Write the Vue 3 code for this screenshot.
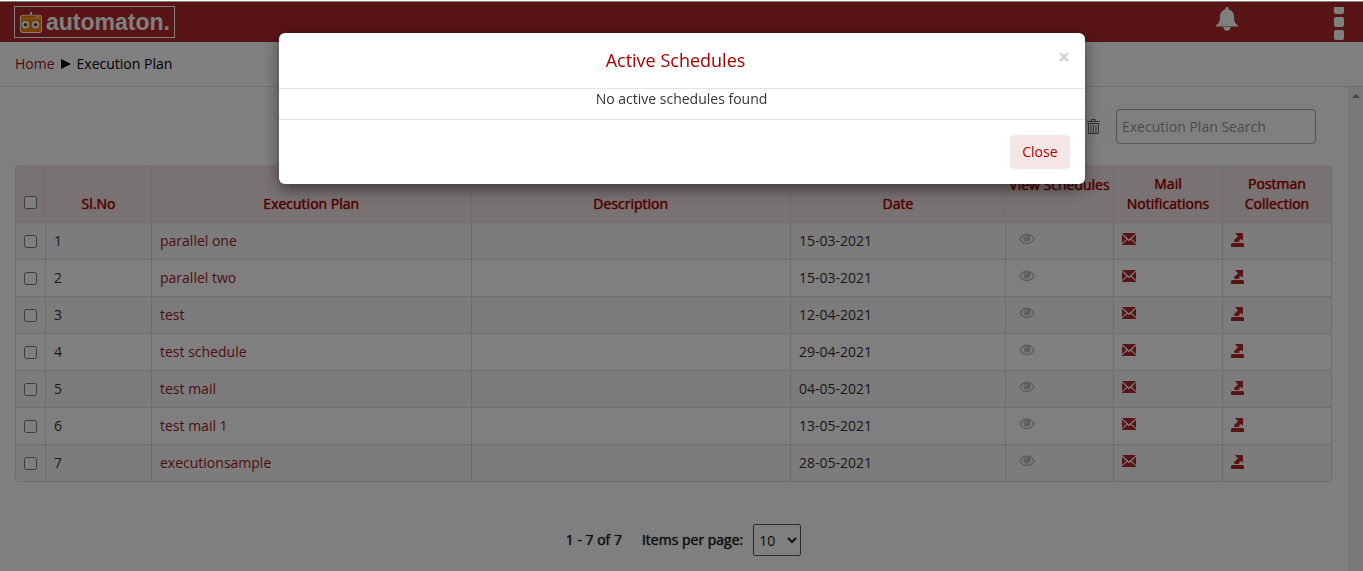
<template>
  <div class="page">
    <header class="topbar">
      <a class="brand" href="#">
        <svg class="brand-icon" viewBox="0 0 24 24" aria-hidden="true">
          <rect x="11" y="1" width="2" height="4" fill="#fff" />
          <rect x="0" y="4" width="24" height="20" rx="3" fill="#fff" />
          <rect x="1" y="5" width="22" height="18" rx="2" fill="#f08000" />
          <rect x="17" y="6" width="4" height="1" fill="#fff" />
          <rect x="1" y="8" width="22" height="1" fill="#fff" opacity=".4" />
          <circle cx="6" cy="15" r="4" fill="#fff" />
          <circle cx="17" cy="15" r="4" fill="#fff" />
          <circle cx="6" cy="15" r="2" fill="#444" />
          <circle cx="17" cy="15" r="2" fill="#444" />
        </svg>
        <span>automaton.</span>
      </a>
      <div class="topbar-actions">
        <button class="icon-btn" type="button" aria-label="Notifications">
          <svg width="22" height="24" viewBox="0 0 22 24" fill="#fff">
            <path d="M11 0c1 0 1.700.7 1.700 1.700v.8C16 3.300 18 6 18 9.500c0 5 1 7 4 8.700v1.300H0v-1.300c3-1.700 4-3.700 4-8.700C4 6 6 3.300 9.300 2.500v-.8C9.300.7 10 0 11 0zM7.500 20h7A3.500 3.500 0 0 1 11 23.800 3.500 3.500 0 0 1 7.500 20z" />
          </svg>
        </button>
        <button class="icon-btn" type="button" aria-label="Menu">
          <svg width="10" height="33" viewBox="0 0 10 33" fill="#fff">
            <path d="M0 0h10v5a2 2 0 0 1-2 2H2a2 2 0 0 1-2-2z" />
            <rect y="10" width="10" height="10" rx="2" />
            <rect y="23" width="10" height="10" rx="2" />
          </svg>
        </button>
      </div>
    </header>

    <nav class="breadcrumb">
      <a href="#">Home</a>
      <svg width="10" height="10" viewBox="0 0 10 10" aria-hidden="true"><path d="M0 0l10 5-10 5z" fill="#000" /></svg>
      <span class="current">Execution Plan</span>
    </nav>

    <div class="body">
      <main class="content">
        <div class="toolbar">
          <button class="trash-btn" type="button" aria-label="Delete">
            <svg width="13" height="16" viewBox="0 0 13 16" fill="none" stroke="#666">
              <path d="M4.500 2V.5h4V2M0 2.500h13M1 4.500h11M1.500 4.500v10h10v-10M4 6v8M6.500 6v8M9 6v8" />
            </svg>
          </button>
          <input v-model="search" class="search" type="text" placeholder="Execution Plan Search" aria-label="Execution Plan Search" />
        </div>

        <table class="plans">
          <colgroup>
            <col class="c-check" />
            <col class="c-no" />
            <col />
            <col />
            <col class="c-date" />
            <col class="c-view" />
            <col class="c-icon" />
            <col class="c-icon" />
          </colgroup>
          <thead>
            <tr>
              <th><input type="checkbox" aria-label="Select all" /></th>
              <th>Sl.No</th>
              <th>Execution Plan</th>
              <th>Description</th>
              <th>Date</th>
              <th class="view-head">View Schedules</th>
              <th>Mail Notifications</th>
              <th>Postman Collection</th>
            </tr>
          </thead>
          <tbody>
            <tr v-for="(plan, i) in plans" :key="plan.name">
              <td><input type="checkbox" :aria-label="'Select ' + plan.name" /></td>
              <td>{{ i + 1 }}</td>
              <td><a href="#">{{ plan.name }}</a></td>
              <td></td>
              <td>{{ plan.date }}</td>
              <td class="icon-cell view">
                <button class="icon-btn" type="button" aria-label="View schedules">
                  <svg width="16" height="12" viewBox="0 0 16 12">
                    <path d="M1 6C4-.3 12-.3 15 6 12 12 4 12 1 6z" fill="none" stroke="#bdbdbd" stroke-width="1.500" />
                    <circle cx="8" cy="5" r="3.500" fill="#bdbdbd" />
                    <path d="M6 5q0-2 2-2" fill="none" stroke="#fff" />
                  </svg>
                </button>
              </td>
              <td class="icon-cell">
                <button class="icon-btn" type="button" aria-label="Mail notifications">
                  <svg width="14" height="12" viewBox="0 0 14 12" fill="#b2282d">
                    <path d="M0 0h14L7 6.500zM0 1.500L4.500 6 0 10zM14 1.500L9.500 6l4.500 4zM0 12v-.7l5.300-4.600L7 8.200l1.700-1.500 5.300 4.600v.7z" />
                  </svg>
                </button>
              </td>
              <td class="icon-cell">
                <button class="icon-btn" type="button" aria-label="Postman collection">
                  <svg width="13" height="14" viewBox="0 0 13 14" fill="#b2282d">
                    <path d="M4 0h8v7.500L10 6 7.500 8 9 9H3.500L3 7l4-3.500zM1 10h11l1 1v3H0v-3z" />
                  </svg>
                </button>
              </td>
            </tr>
          </tbody>
        </table>

        <div class="pager">
          <span>1 - {{ plans.length }} of {{ plans.length }}</span>
          <label for="page-size">Items per page:</label>
          <select id="page-size" v-model="pageSize">
            <option :value="10">10</option>
            <option :value="25">25</option>
            <option :value="50">50</option>
          </select>
        </div>
      </main>
      <div class="scroll-track" aria-hidden="true">
        <svg width="8" height="4" viewBox="0 0 8 4"><path d="M4 0l4 4H0z" fill="#8a8a8a" /></svg>
      </div>
    </div>

    <div v-if="open" class="backdrop">
      <section class="modal" role="dialog" aria-labelledby="modal-title">
        <div class="modal-header">
          <h4 id="modal-title">Active Schedules</h4>
          <button class="modal-x" type="button" aria-label="Close dialog" @click="open = false">
            <svg width="10" height="10" viewBox="0 0 10 10"><path d="M1 1l8 8M9 1L1 9" stroke="#ccc" stroke-width="2" /></svg>
          </button>
        </div>
        <p class="modal-body">No active schedules found</p>
        <div class="modal-footer">
          <button class="close-btn" type="button" @click="open = false">Close</button>
        </div>
      </section>
    </div>
  </div>
</template>

<script setup>
import { ref } from 'vue'

const open = ref(true)
const search = ref('')
const pageSize = ref(10)

const plans = [
  { name: 'parallel one', date: '15-03-2021' },
  { name: 'parallel two', date: '15-03-2021' },
  { name: 'test', date: '12-04-2021' },
  { name: 'test schedule', date: '29-04-2021' },
  { name: 'test mail', date: '04-05-2021' },
  { name: 'test mail 1', date: '13-05-2021' },
  { name: 'executionsample', date: '28-05-2021' },
]
</script>

<style>
body {
  margin: 0;
  background: #fff;
}
</style>

<style scoped>
.page {
  display: flex;
  flex-direction: column;
  min-height: 100vh;
  font: 14px/20px "Open Sans", sans-serif;
  color: #333;
}
.page * {
  box-sizing: border-box;
}
a {
  color: #a01820;
  text-decoration: none;
}
button, input, select {
  font: inherit;
}
.icon-btn {
  display: block;
  padding: 0;
  border: 0;
  background: none;
}
.icon-btn svg {
  display: block;
}

.topbar {
  display: flex;
  justify-content: space-between;
  align-items: flex-start;
  height: 42px;
  padding: 4px 19px 0 14px;
  border-top: 2px solid #fff;
  background: #b2282d;
}
.brand {
  display: flex;
  align-items: center;
  gap: 3px;
  height: 32px;
  padding: 0 4px;
  border: 1px solid #fff;
  color: #fff;
  font: bold 23px/30px "Liberation Sans", Arial, sans-serif;
}
.brand-icon {
  width: 24px;
  height: 22px;
}
.topbar-actions {
  display: flex;
  align-items: flex-start;
  gap: 96px;
  padding-top: 1px;
}

.breadcrumb {
  display: flex;
  align-items: center;
  gap: 6px;
  height: 45px;
  padding-left: 15px;
  border-bottom: 1px solid #ddd;
}
.current {
  color: #000;
}

.body {
  display: flex;
  flex: 1;
}
.content {
  flex: 1;
  padding: 22px 16px 0 15px;
}
.scroll-track {
  display: flex;
  justify-content: center;
  width: 15px;
  padding-top: 7px;
  background: #f1f1f1;
}
.toolbar {
  display: flex;
  justify-content: flex-end;
  gap: 4px;
  padding: 0 16px 21px 0;
}
.trash-btn {
  display: flex;
  align-items: center;
  justify-content: center;
  width: 38px;
  height: 35px;
  padding: 0;
  border: 0;
  border-radius: 4px;
  background: #fcfcfc;
}
.search {
  width: 200px;
  height: 35px;
  padding: 0 5px;
  border: 1px solid #aaa;
  border-radius: 4px;
  background: #fff;
}
.search::placeholder {
  color: #999;
}

.plans {
  width: 100%;
  table-layout: fixed;
  border-collapse: separate;
  border-spacing: 0;
  border: 1px solid #ddd;
  border-width: 0 0 0 1px;
  border-radius: 4px;
  overflow: hidden;
}
.c-check { width: 30px; }
.c-no { width: 106px; }
.c-date { width: 215px; }
.c-view { width: 108px; }
.c-icon { width: 109px; }
.plans th, .plans td {
  padding: 8px;
  border-right: 1px solid #ddd;
  border-bottom: 1px solid #ddd;
}
.plans th {
  height: 58px;
  background: #f3e5e5;
  color: #a40000;
  font-weight: 400;
  text-shadow: 0 0 1px currentColor;
  text-align: center;
  vertical-align: bottom;
}
.plans td {
  height: 37px;
  vertical-align: top;
}
.plans tbody tr:nth-child(odd) {
  background: #f9f9f9;
}
.plans input {
  display: block;
  width: 13px;
  height: 13px;
  margin: 4px 0 0;
}
.plans th input {
  margin: 0 0 5px;
}
.plans .view-head {
  padding: 10px 0 0;
  vertical-align: top;
  white-space: nowrap;
}
.plans .icon-cell {
  padding-top: 10px;
}
.plans .view {
  padding-left: 13px;
}

.pager {
  display: flex;
  align-items: center;
  justify-content: center;
  padding: 42px 0 0 20px;
  color: #222;
  text-shadow: 0 0 1px currentColor;
}
.pager label {
  margin: 0 10px 0 20px;
}
.pager select {
  width: 48px;
  height: 32px;
  padding: 0 0 0 1px;
  border: 1px solid #555;
  border-radius: 2px;
  background: #fff;
  color: #222;
}

.backdrop {
  position: fixed;
  inset: 1px 0 0;
  padding: 32px 20px;
  background: rgba(0, 0, 0, .5);
}
.modal {
  max-width: 806px;
  margin: 0 auto;
  border-radius: 6px;
  background: #fff;
  box-shadow: 0 5px 15px rgba(0, 0, 0, .5);
}
.modal-header {
  display: flex;
  padding: 15px;
  border-bottom: 1px solid #e5e5e5;
}
.modal-header h4 {
  flex: 1;
  margin: 0;
  color: #a40000;
  font-size: 18px;
  font-weight: 400;
  line-height: 25px;
  text-align: center;
}
.modal-x {
  display: flex;
  align-items: center;
  height: 18px;
  padding: 0 1px;
  border: 0;
  background: none;
}
.modal-body {
  margin: 0;
  padding-bottom: 10px;
  text-align: center;
}
.modal-footer {
  display: flex;
  justify-content: flex-end;
  padding: 15px;
  border-top: 1px solid #e5e5e5;
}
.close-btn {
  height: 34px;
  padding: 0 12px;
  border: 0;
  border-radius: 4px;
  background: #f5e6e6;
  color: #b20000;
}
</style>
